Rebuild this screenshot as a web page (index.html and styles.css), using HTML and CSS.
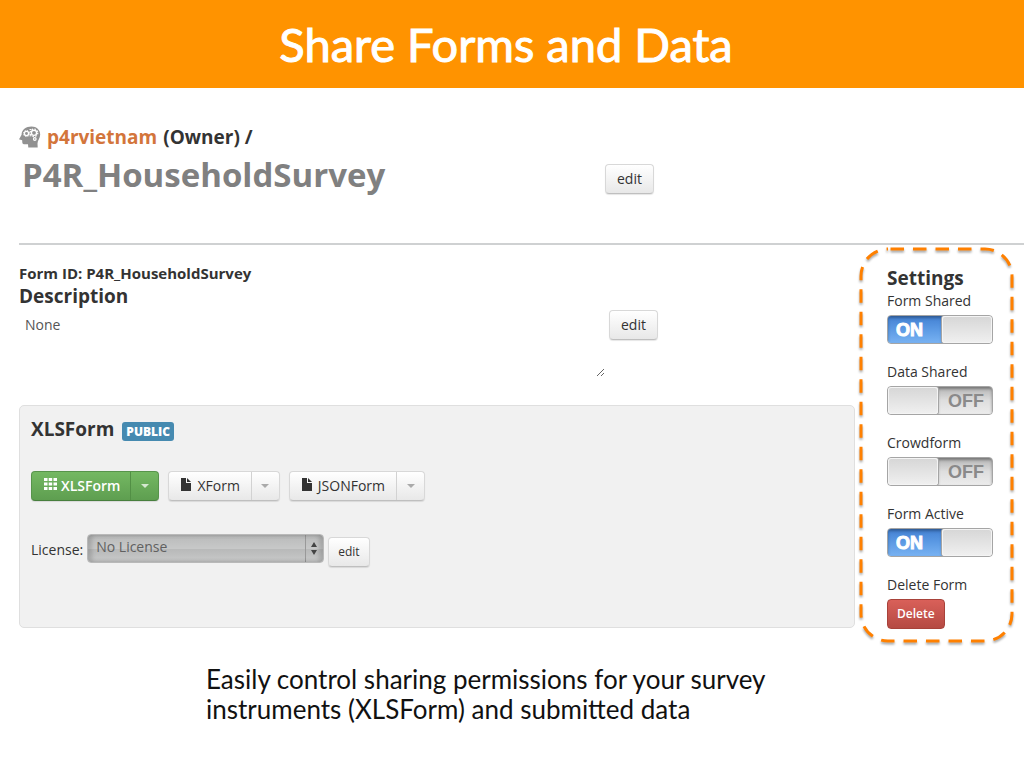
FILE: index.html
```html
<!DOCTYPE html>
<html lang="en">
<head>
<meta charset="utf-8">
<meta name="viewport" content="width=device-width, initial-scale=1">
<title>Share Forms and Data</title>
<link rel="stylesheet" href="styles.css">
</head>
<body>
<header class="banner"><h1 class="banner-title">Share Forms and Data</h1></header>
<main class="page">
  <section class="form-header">
    <p class="owner">
      <svg class="owner-icon" viewBox="0 0 22 22" aria-hidden="true">
        <path fill="#919191" d="M12.500 0.500C17.500 0.500 21.200 3.800 21.200 8.500C21.200 12 18.500 14.500 18.500 17.500L18.700 21.500H9.300L9 18.300H5.500C3.600 18.300 3.200 17.500 3.200 14.300L0.600 13.600C0 13.400 0.100 12.900 0.500 12.400L2.600 8.800C2.400 3.900 7 0.500 12.500 0.500Z"/>
        <g fill="none" stroke="#fff">
          <circle cx="7.500" cy="7.500" r="2.100" stroke-width="1.300"/>
          <circle cx="7.500" cy="7.500" r="3.100" stroke-width="1" stroke-dasharray="1.200 1.230"/>
          <circle cx="15" cy="6.800" r="2.600" stroke-width="1.400"/>
          <circle cx="15" cy="6.800" r="3.800" stroke-width="1.200" stroke-dasharray="1.500 1.480"/>
          <circle cx="15.800" cy="13" r="1.300" stroke-width="1.200"/>
          <path d="M10.500 3.500h1.500M10.600 9.800h1.800"/>
        </g>
      </svg>
      <a class="owner-link" href="#">p4rvietnam</a>
      <span>(Owner) /</span>
    </p>
    <div class="edit-row">
      <h2 class="form-title">P4R_HouseholdSurvey</h2>
      <button class="btn" type="button">edit</button>
    </div>
  </section>
  <div class="columns">
    <div class="details">
      <h4 class="form-id">Form ID: P4R_HouseholdSurvey</h4>
      <h3 class="heading"><label for="description">Description</label></h3>
      <div class="edit-row description-row">
        <textarea class="description" id="description">None</textarea>
        <button class="btn" type="button">edit</button>
      </div>
      <section class="panel">
        <div class="panel-head"><h3 class="heading">XLSForm</h3><span class="badge">PUBLIC</span></div>
        <div class="downloads">
          <div class="split split-green">
            <button class="split-main" type="button">
              <svg class="grid-icon" viewBox="0 0 13 12" aria-hidden="true"><path fill="currentColor" d="M0 0h3.500v3H0zM4.700 0h3.500v3H4.700zM9.500 0h3.500v3H9.500zM0 4.500h3.500v3H0zM4.700 4.500h3.500v3H4.700zM9.500 4.500h3.500v3H9.500zM0 9h3.500v3H0zM4.700 9h3.500v3H4.700zM9.500 9h3.500v3H9.500z"/></svg>XLSForm
            </button>
            <button class="split-caret" type="button" aria-label="XLSForm options"></button>
          </div>
          <div class="split">
            <button class="split-main" type="button">
              <svg class="file-icon" viewBox="0 0 10 13" aria-hidden="true"><path fill="#333" d="M0 0H5V5H10V13H0zM6 0L10 4H6z"/></svg>XForm
            </button>
            <button class="split-caret" type="button" aria-label="XForm options"></button>
          </div>
          <div class="split">
            <button class="split-main" type="button">
              <svg class="file-icon" viewBox="0 0 10 13" aria-hidden="true"><path fill="#333" d="M0 0H5V5H10V13H0zM6 0L10 4H6z"/></svg>JSONForm
            </button>
            <button class="split-caret" type="button" aria-label="JSONForm options"></button>
          </div>
        </div>
        <div class="license">
          <label for="license">License:</label>
          <span class="select-wrap">
            <select class="select" id="license"><option>No License</option></select>
            <svg class="select-arrows" viewBox="0 0 6 13" aria-hidden="true"><path fill="#444" d="M3 0L6 5H0zM3 13L0 8H6z"/></svg>
          </span>
          <button class="btn btn-small" type="button">edit</button>
        </div>
      </section>
    </div>
    <aside class="settings">
      <svg class="outline" aria-hidden="true"><rect class="outline-rect" rx="27" ry="27"/></svg>
      <h3 class="heading">Settings</h3>
      <div class="setting">
        <label for="form-shared">Form Shared</label>
        <span class="switch"><span class="state-on">ON</span><span class="knob"></span><input id="form-shared" type="checkbox" role="switch" checked></span>
      </div>
      <div class="setting">
        <label for="data-shared">Data Shared</label>
        <span class="switch"><span class="knob"></span><span class="state-off">OFF</span><input id="data-shared" type="checkbox" role="switch"></span>
      </div>
      <div class="setting">
        <label for="crowdform">Crowdform</label>
        <span class="switch"><span class="knob"></span><span class="state-off">OFF</span><input id="crowdform" type="checkbox" role="switch"></span>
      </div>
      <div class="setting">
        <label for="form-active">Form Active</label>
        <span class="switch"><span class="state-on">ON</span><span class="knob"></span><input id="form-active" type="checkbox" role="switch" checked></span>
      </div>
      <div class="setting">
        <span id="delete-label">Delete Form</span>
        <button class="btn-delete" type="button" aria-describedby="delete-label">Delete</button>
      </div>
    </aside>
  </div>
  <p class="caption">Easily control sharing permissions for your survey instruments (XLSForm) and submitted data</p>
</main>
</body>
</html>
```
FILE: styles.css
```css
* { box-sizing: border-box; }
body {
  margin: 0;
  background: #fff;
  color: #333;
  font: 14px/20px "Open Sans", "Noto Sans", sans-serif;
}
h1, h2, h3, h4, p { margin: 0; }
button, select, textarea { font: inherit; color: inherit; }

.banner {
  padding: 16px 0;
  background: #ff9300;
  color: #fff;
  text-align: center;
}
.banner-title {
  padding-right: 12px;
  font: 400 47px/56px Lato, sans-serif;
  -webkit-text-stroke: 1px #fff;
}

.page { padding-left: 19px; }
.form-header {
  padding: 36px 0 43px;
  border-bottom: 2px solid #cfd1d2;
}
.owner {
  display: flex;
  align-items: center;
  gap: 6px;
  font-size: 19px;
  line-height: 26px;
  font-weight: 700;
}
.owner-icon { width: 22px; height: 22px; }
.owner-link { color: #d3753b; text-decoration: none; }
.edit-row { display: flex; align-items: flex-start; }
.form-title {
  flex: 0 1 586px;
  padding-left: 3px;
  color: #808080;
  font-size: 33px;
  line-height: 50px;
}
.form-header .edit-row { align-items: center; }
.form-header .btn { margin-top: 8px; }

.btn {
  height: 30px;
  padding: 0 11px;
  border: 1px solid #d8d8d8;
  border-bottom-color: #bfbfbf;
  border-radius: 4px;
  background: linear-gradient(#fff, #e8e8e8);
  box-shadow: 0 1px 1px #0000001a;
}
.btn-small { padding: 0 9px; font-size: 12px; }

.columns { display: flex; align-items: flex-start; gap: 4px; margin-right: 10px; }
.details { flex: 1; padding-top: 18px; }
.form-id { font-size: 15px; line-height: 20px; }
.heading { font-size: 19px; line-height: 26px; }
.description-row { padding: 2px 0 28px; gap: 4px; }
.description {
  flex: 0 1 586px;
  height: 66px;
  padding: 4px 6px;
  border: 0;
  background: none;
  color: #555;
  resize: both;
}
.description-row .btn { margin-top: -1px; }

.panel {
  min-height: 223px;
  padding: 10px 11px;
  border: 1px solid #dfdfdf;
  border-radius: 5px;
  background: #f1f1f1;
}
.panel-head { display: flex; align-items: center; gap: 8px; }
.badge {
  margin-top: 4px;
  padding: 0 4px;
  border-radius: 3px;
  background: #468ab0;
  color: #fff;
  font-size: 12px;
  line-height: 19px;
  font-weight: 800;
}
.downloads { display: flex; gap: 9px; margin-top: 29px; }
.split {
  display: flex;
  height: 30px;
  border: 1px solid #d8d8d8;
  border-bottom-color: #bfbfbf;
  border-radius: 4px;
  background: linear-gradient(#fff, #e8e8e8);
  box-shadow: 0 1px 1px #0000001a;
}
.split-main {
  display: flex;
  align-items: center;
  gap: 6px;
  padding: 0 11px 0 12px;
  border: 0;
  background: none;
}
.split-caret {
  display: flex;
  align-items: center;
  justify-content: center;
  width: 28px;
  padding: 0;
  border: 0;
  border-left: 1px solid #d2d2d2;
  background: none;
  color: #aaa;
}
.split-caret::after {
  content: "";
  border: 4px solid transparent;
  border-top-color: currentColor;
  border-bottom: 0;
}
.split-green {
  border-color: #57944b #57944b #487f3e;
  background: linear-gradient(#74b862, #5e9e50);
  color: #fff;
}
.split-green .split-main { gap: 4px; padding-right: 10px; font-weight: 600; }
.split-green .split-caret { border-left-color: #528f45; color: #d5e8d0; }
.grid-icon { width: 13px; height: 12px; margin-bottom: 4px; }
.file-icon { width: 10px; height: 13px; margin-bottom: 4px; }

.license { display: flex; align-items: center; gap: 4px; margin-top: 32px; }
.select-wrap { position: relative; flex: 0 1 237px; margin-bottom: 4px; }
.select {
  display: block;
  width: 100%;
  height: 29px;
  padding: 0 24px 2px 8px;
  border: 1px solid #b9b9b9;
  border-radius: 4px;
  appearance: none;
  background:
    linear-gradient(#999, #999) right 17px center / 1px 100% no-repeat,
    linear-gradient(#b9baba, #c7c8c8 50%, #b8b9b9 54%, #c9caca);
  box-shadow: inset 4px 0 4px #00000026, inset -4px 0 4px #00000026;
  color: #606060;
}
.select-arrows {
  position: absolute;
  top: 8px;
  right: 7px;
  width: 6px;
  height: 13px;
  pointer-events: none;
}
.license .btn { margin-top: 4px; }

.settings {
  position: relative;
  flex: 0 0 155px;
  margin-top: 2px;
  padding: 18px 20px 14px 28px;
}
.outline {
  position: absolute;
  inset: 0;
  width: 100%;
  height: 100%;
  overflow: visible;
  pointer-events: none;
  filter: drop-shadow(0 2px 1px #00000059);
}
.outline-rect {
  x: 2px;
  y: 2px;
  width: calc(100% - 4px);
  height: calc(100% - 4px);
  fill: none;
  stroke: #ff8000;
  stroke-width: 3px;
  stroke-dasharray: 13.5 9;
  stroke-dashoffset: 20px;
}
.setting {
  display: flex;
  flex-direction: column;
  align-items: flex-start;
  gap: 4px;
  margin-bottom: 18px;
}
.setting:last-child { margin-bottom: 0; }
.switch {
  position: relative;
  display: flex;
  width: 106px;
  height: 29px;
  border: 1px solid #a5a5a5;
  border-radius: 4px;
  background: #e4e4e4;
  overflow: hidden;
  font: 700 18px/28px "Liberation Sans", Arial, sans-serif;
}
.switch input {
  position: absolute;
  inset: 0;
  width: 100%;
  height: 100%;
  margin: 0;
  opacity: 0;
}
.state-on {
  flex: 1;
  padding-left: 8px;
  background: linear-gradient(#4280d2, #5c9ae4 50%, #78b2f2);
  box-shadow: inset 0 2px 3px #0000004d;
  color: #fff;
  -webkit-text-stroke: 1px #fff;
}
.state-off {
  flex: 1;
  padding-right: 8px;
  background: linear-gradient(#b4b4b4, #dedede 50%, #ececec);
  box-shadow: inset 0 2px 3px #00000059;
  color: #8a8a8a;
  text-align: right;
}
.knob {
  flex: 0 0 50px;
  border-radius: 3px;
  background: linear-gradient(#d6d6d6, #f0f0f0);
  box-shadow: 0 0 0 1px #a5a5a5, inset 0 0 0 1px #f4f4f4;
  z-index: 1;
}
.btn-delete {
  height: 30px;
  padding: 0 9px;
  border: 1px solid #a8423a;
  border-radius: 4px;
  background: linear-gradient(#d96059, #b54a43);
  color: #fff;
  font-size: 12px;
  font-weight: 600;
}

.caption {
  max-width: 800px;
  padding: 21px 0 0 187px;
  color: #111;
  font: 400 26px/30px Lato, sans-serif;
}
```
